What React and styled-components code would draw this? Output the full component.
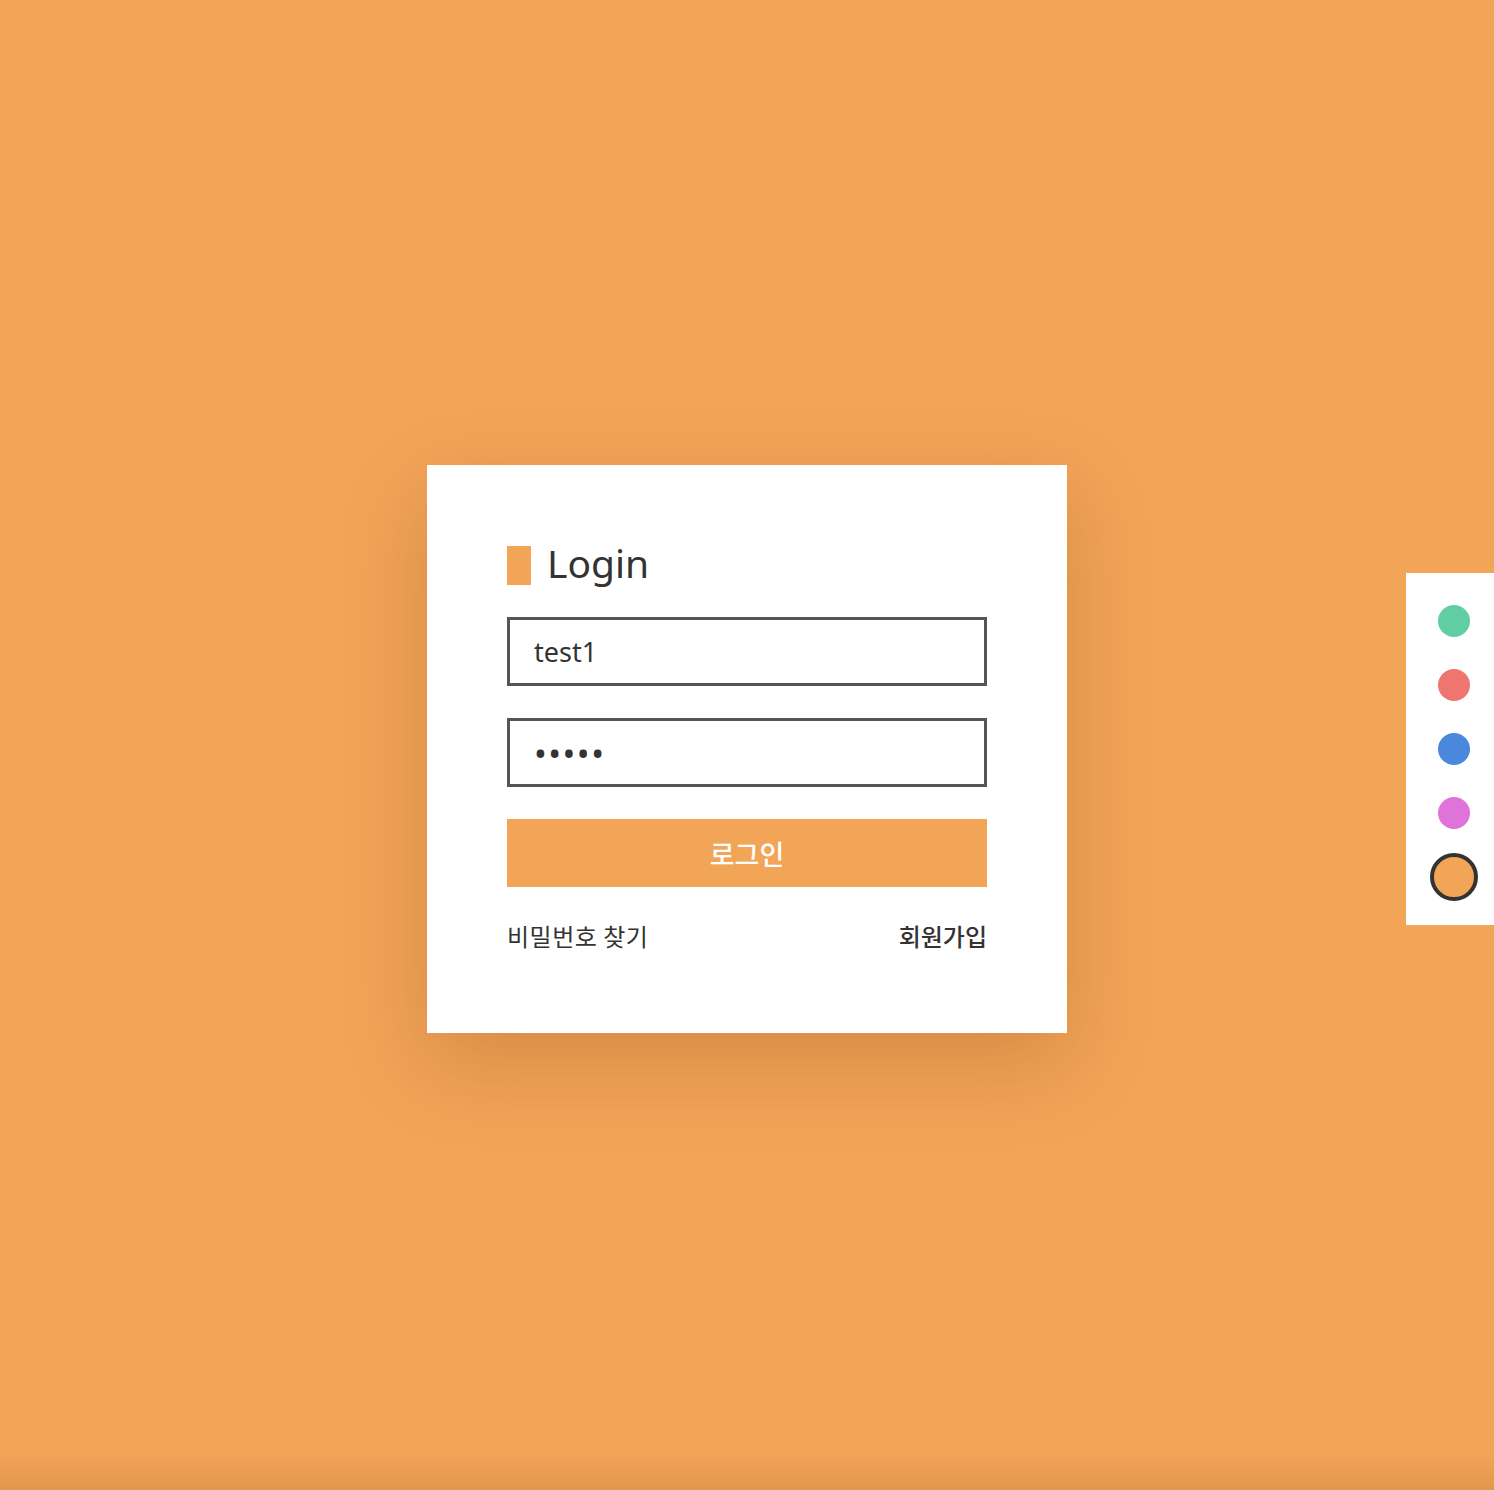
import React, { useState } from "react";
import styled, { createGlobalStyle } from "styled-components";

const THEMES = ["#60CEA2", "#EE7570", "#4A88DB", "#E073DA", "#F2A457"];

const GlobalStyle = createGlobalStyle`
  * { box-sizing: border-box; }
  html, body { margin: 0; padding: 0; }
  body {
    background-color: ${props => props.bg};
    font-family: "Noto Sans", "Noto Sans CJK KR", sans-serif;
    color: #333;
  }
`;

const Page = styled.div`
  height: 100vh;
  padding-top: 8px;
  display: flex;
  justify-content: center;
  align-items: center;
  background-image: linear-gradient(to top, rgba(120, 60, 0, 0.12), rgba(120, 60, 0, 0) 36px);
`;

const Card = styled.div`
  width: 640px;
  background: #fff;
  padding: 80px;
  display: flex;
  flex-direction: column;
  gap: 32px;
  box-shadow: 0 30px 80px rgba(110, 55, 0, 0.22);
`;

const Title = styled.h1`
  margin: 0;
  height: 40px;
  display: flex;
  align-items: center;
  gap: 16px;
  font-size: 39px;
  font-weight: 400;
  color: #333;
  line-height: 1;
  &::before {
    content: "";
    width: 24px;
    height: 39px;
    background: ${props => props.accent};
  }
  span {
    margin-top: -6px;
  }
`;

const Input = styled.input`
  width: 100%;
  height: 69px;
  border: 3px solid #555;
  padding: 0 24px;
  font-family: "Noto Sans", "Noto Sans CJK KR", sans-serif;
  font-size: ${props => (props.type === "password" ? "34px" : "27px")};
  letter-spacing: ${props => (props.type === "password" ? "1.5px" : "0")};
  color: #333;
  outline: none;
  background: #fff;
`;

const Button = styled.button`
  height: 68px;
  border: none;
  background: ${props => props.accent};
  color: #fff;
  font-family: "Noto Sans CJK KR", "Noto Sans", sans-serif;
  font-size: 27px;
  font-weight: 500;
  cursor: pointer;
`;

const Links = styled.div`
  display: flex;
  justify-content: space-between;
  font-family: "Noto Sans CJK KR", "Noto Sans", sans-serif;
  font-size: 24px;
  line-height: 34px;
`;

const LinkText = styled.a`
  color: #333;
  text-decoration: none;
  font-weight: ${props => (props.bold ? 500 : 400)};
  letter-spacing: ${props => (props.bold ? "0" : "0.5px")};
`;

const Palette = styled.div`
  position: fixed;
  right: 0;
  top: 573px;
  width: 88px;
  padding: 32px 0 32px 32px;
  background: #fff;
  display: flex;
  flex-direction: column;
  gap: 32px;
`;

const Dot = styled.button`
  width: 32px;
  height: 32px;
  padding: 0;
  border-radius: 50%;
  background: ${props => props.color};
  border: none;
  cursor: pointer;
  ${props =>
    props.active &&
    `
    width: 48px;
    height: 48px;
    margin: -8px;
    border: 4px solid #333;
  `}
`;

export default function App() {
  const [theme, setTheme] = useState(4);
  const accent = THEMES[theme];
  return (
    <>
      <GlobalStyle bg={accent} />
      <Page>
        <Card>
          <Title accent={accent}><span>Login</span></Title>
          <Input type="text" defaultValue="test1" />
          <Input type="password" defaultValue="12345" />
          <Button accent={accent}>로그인</Button>
          <Links>
            <LinkText href="#">비밀번호 찾기</LinkText>
            <LinkText href="#" bold>회원가입</LinkText>
          </Links>
        </Card>
      </Page>
      <Palette>
        {THEMES.map((c, i) => (
          <Dot key={c} color={c} active={i === theme} onClick={() => setTheme(i)} />
        ))}
      </Palette>
    </>
  );
}
